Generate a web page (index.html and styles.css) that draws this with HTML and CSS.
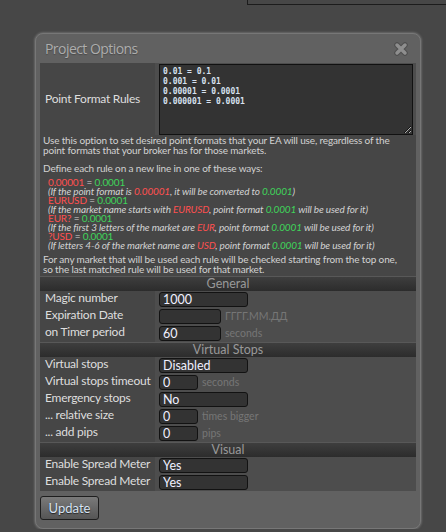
FILE: index.html
```html
<!DOCTYPE html>
<html lang="en">
<head>
    <meta charset="UTF-8">
    <meta name="viewport" content="width=device-width, initial-scale=1.0">
    <title>Project Options</title>
    <link rel="stylesheet" href="styles.css">
</head>
<body>
    <div class="topbox"></div>

    <div class="dialog">
        <div class="titlebar">
            <span class="title">Project Options</span>
            <svg class="close" width="16" height="16" viewBox="0 0 16 16">
                <path d="M4 4 L12 12 M12 4 L4 12" stroke="#4e4e4e" stroke-width="5.5" stroke-linecap="round"/>
                <path d="M4 4 L12 12 M12 4 L4 12" stroke="#8e8e8e" stroke-width="3.5" stroke-linecap="round"/>
            </svg>
        </div>

        <div class="panel">
            <div class="row rules">
                <div class="label">Point Format Rules</div>
                <div class="value">
                    <textarea class="rulebox">0.01 = 0.1
0.001 = 0.01
0.00001 = 0.0001
0.000001 = 0.0001</textarea>
                </div>
            </div>

            <div class="desc">
                <p>Use this option to set desired point formats that your EA will use, regardless of the<br>point formats that your broker has for those markets.</p>
                <p class="intro">Define each rule on a new line in one of these ways:</p>
                <ul class="examples">
                    <li><span class="red">0.00001</span> = <span class="green">0.0001</span></li>
                    <li class="note">(If the point format is <span class="red">0.00001</span>, it will be converted to <span class="green">0.0001</span>)</li>
                    <li><span class="red">EURUSD</span> = <span class="green">0.0001</span></li>
                    <li class="note">(If the market name starts with <span class="red">EURUSD</span>, point format <span class="green">0.0001</span> will be used for it)</li>
                    <li><span class="red">EUR?</span> = <span class="green">0.0001</span></li>
                    <li class="note">(If the first 3 letters of the market are <span class="red">EUR</span>, point format <span class="green">0.0001</span> will be used for it)</li>
                    <li><span class="red">?USD</span> = <span class="green">0.0001</span></li>
                    <li class="note">(If letters 4-6 of the market name are <span class="red">USD</span>, point format <span class="green">0.0001</span> will be used for it)</li>
                </ul>
                <p>For any market that will be used each rule will be checked starting from the top one,<br>so the last matched rule will be used for that market.</p>
            </div>

            <div class="section">General</div>
            <div class="row">
                <div class="label">Magic number</div>
                <div class="value"><input class="field long" type="text" value="1000"></div>
            </div>
            <div class="row">
                <div class="label">Expiration Date</div>
                <div class="value"><input class="field mid" type="text" value=""><span class="unit">ГГГГ.ММ.ДД</span></div>
            </div>
            <div class="row">
                <div class="label">on Timer period</div>
                <div class="value"><input class="field mid" type="text" value="60"><span class="unit">seconds</span></div>
            </div>

            <div class="section">Virtual Stops</div>
            <div class="row">
                <div class="label">Virtual stops</div>
                <div class="value"><input class="field long" type="text" value="Disabled"></div>
            </div>
            <div class="row">
                <div class="label">Virtual stops timeout</div>
                <div class="value"><input class="field short" type="text" value="0"><span class="unit">seconds</span></div>
            </div>
            <div class="row">
                <div class="label">Emergency stops</div>
                <div class="value"><input class="field long" type="text" value="No"></div>
            </div>
            <div class="row">
                <div class="label">... relative size</div>
                <div class="value"><input class="field short" type="text" value="0"><span class="unit">times bigger</span></div>
            </div>
            <div class="row">
                <div class="label">... add pips</div>
                <div class="value"><input class="field short" type="text" value="0"><span class="unit">pips</span></div>
            </div>

            <div class="section">Visual</div>
            <div class="row">
                <div class="label">Enable Spread Meter</div>
                <div class="value"><input class="field long" type="text" value="Yes"></div>
            </div>
            <div class="row">
                <div class="label">Enable Spread Meter</div>
                <div class="value"><input class="field long" type="text" value="Yes"></div>
            </div>
        </div>

        <button class="update">Update</button>
    </div>
</body>
</html>
```

FILE: styles.css
```css
body {
    margin: 0;
    background-color: #474747;
    font-family: Lato, "Open Sans", sans-serif;
    color: #dcdcdc;
}
.topbox {
    margin-left: 247px;
    height: 4px;
    border: 1px solid #1c1c1c;
    border-top: none;
    border-right: none;
}
.dialog {
    width: 386px;
    margin: 28px 0 0 35px;
    padding: 0 4px 8px 4px;
    box-sizing: border-box;
    background-color: #616161;
    border: 1px solid #777;
    border-radius: 8px;
    box-shadow: 0 0 2px 1px rgba(140, 140, 140, 0.5);
}
.titlebar {
    height: 29px;
    display: flex;
    align-items: center;
    justify-content: space-between;
    padding: 0 7px 0 5px;
}
.title {
    font-family: "Open Sans", sans-serif;
    font-size: 14px;
    color: #adadad;
    text-shadow: 0 1px 1px #4a4a4a;
    letter-spacing: -0.55px;
}
.close {
    display: block;
}
.panel {
    background-color: #464646;
}
.row {
    display: grid;
    grid-template-columns: 115px 1fr;
    height: 17px;
}
.label {
    font-size: 12px;
    letter-spacing: -0.25px;
    line-height: 13px;
    padding-left: 5px;
    color: #dedede;
    white-space: nowrap;
}
.value {
    background-color: #4d4d4d;
    padding: 1px 0 0 4px;
    display: flex;
    align-items: flex-start;
}
.rules {
    height: 72px;
}
.rules .label {
    align-self: center;
    line-height: 20px;
}
.rulebox {
    width: 254px;
    height: 71px;
    box-sizing: border-box;
    margin: 0;
    padding: 2px 3px;
    background-color: #333;
    border: 1px solid #111;
    color: #d8e2f0;
    font-family: "DejaVu Sans Mono", monospace;
    font-size: 8px;
    line-height: 10px;
    font-weight: bold;
}
.field {
    height: 15px;
    box-sizing: border-box;
    margin: 0;
    padding: 0 0 0 3px;
    background-color: #333;
    border: 1px solid #121212;
    border-radius: 3px;
    color: #f0f0ff;
    font-family: Lato, sans-serif;
    font-size: 12.5px;
    line-height: 13px;
}
.long {
    width: 89px;
}
.mid {
    width: 62px;
}
.short {
    width: 39px;
}
.unit {
    margin-left: 4px;
    font-size: 10.5px;
    line-height: 15px;
    color: #767676;
}
.desc {
    height: 141px;
    box-sizing: border-box;
    padding: 0 3px;
    font-family: Lato, sans-serif;
    font-size: 10px;
    letter-spacing: -0.15px;
    color: #d2d2d2;
    white-space: nowrap;
}
.desc p {
    margin: 0 0 8px 0;
    line-height: 10px;
}
.desc .intro {
    margin-bottom: 4.5px;
}
.examples {
    list-style: none;
    margin: 0 0 4px 0;
    padding: 0 0 0 5px;
}
.examples li {
    line-height: 9px;
}
.note {
    font-style: italic;
}
.red {
    color: #ff5050;
}
.green {
    color: #3fd45a;
}
.section {
    height: 14px;
    border-top: 1px solid #585858;
    background: linear-gradient(#3e3e3e, #2c2c2c);
    text-align: center;
    font-size: 12.5px;
    line-height: 14px;
    color: #999;
}
.update {
    margin-top: 5px;
    width: 59px;
    height: 24px;
    background: linear-gradient(#7a7a7a, #555);
    border: 1px solid #1e1e1e;
    border-radius: 3px;
    font-family: Lato, sans-serif;
    font-size: 13px;
    color: #d8e4f4;
    text-shadow: 0 1px 1px #222;
    cursor: pointer;
}
```
